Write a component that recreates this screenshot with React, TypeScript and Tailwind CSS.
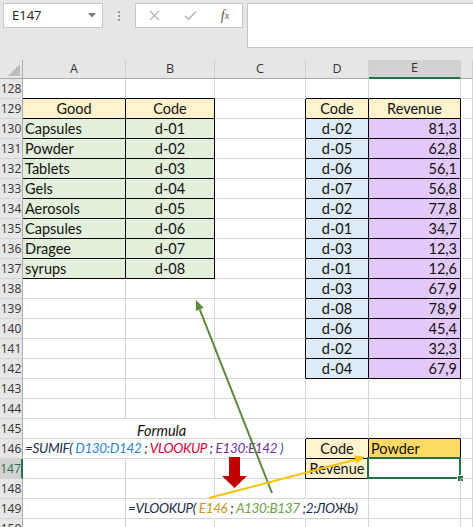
import React from 'react'

type Align = 'l' | 'c' | 'r'

interface CellData {
  text?: React.ReactNode
  bg?: string
  align?: Align
  italic?: boolean
  spill?: boolean
}

const ROWS = Array.from({ length: 23 }, (_, i) => 128 + i)
const COLS = ['A', 'B', 'C', 'D', 'E', 'F']

const goods = ['Capsules', 'Powder', 'Tablets', 'Gels', 'Aerosols', 'Capsules', 'Dragee', 'syrups']
const codesD = ['d-02', 'd-05', 'd-06', 'd-07', 'd-02', 'd-01', 'd-03', 'd-01', 'd-03', 'd-08', 'd-06', 'd-02', 'd-04']
const revenue = ['81,3', '62,8', '56,1', '56,8', '77,8', '34,7', '12,3', '12,6', '67,9', '78,9', '45,4', '32,3', '67,9']

const cn = (...parts: (string | false | undefined)[]) => parts.filter(Boolean).join(' ')

// which cells sit inside a bordered table
const inTable = (r: number, c: number) =>
  ((c === 0 || c === 1) && r >= 129 && r <= 137) ||
  ((c === 3 || c === 4) && r >= 129 && r <= 142) ||
  ((c === 3 || c === 4) && r >= 146 && r <= 147)

// right borders hidden where text spills over / merged cells
const hiddenRight = (r: number, c: number) =>
  ((r === 145 || r === 146) && (c === 0 || c === 1)) || (r === 149 && (c === 1 || c === 2))

const sumifFormula = (
  <>
    <span className="text-[#1c2a4a]">=SUMIF( </span>
    <span className="text-[#1f86d6]">D130:D142</span>
    <span className="text-[#1c2a4a]"> ; </span>
    <span className="text-[#d8003a]">VLOOKUP</span>
    <span className="text-[#1c2a4a]"> ; </span>
    <span className="text-[#7030a0]">E130:E142</span>
    <span className="text-[#1f4fb0]"> )</span>
  </>
)

const vlookupFormula = (
  <>
    <span className="text-[#1c2a4a]">=VLOOKUP( </span>
    <span className="text-[#c8961a]">E146</span>
    <span className="text-[#1c2a4a]"> ; </span>
    <span className="text-[#6aa047]">A130:B137</span>
    <span className="text-[#1c2a4a]"> ;2;ЛОЖЬ)</span>
  </>
)

function getCell(r: number, c: number): CellData {
  if (r === 129) {
    if (c === 0) return { text: 'Good', bg: 'bg-[#fff2cc]', align: 'c' }
    if (c === 1 || c === 3) return { text: 'Code', bg: 'bg-[#fff2cc]', align: 'c' }
    if (c === 4) return { text: 'Revenue', bg: 'bg-[#fff2cc]', align: 'c' }
  }
  if (r >= 130 && r <= 137) {
    if (c === 0) return { text: goods[r - 130], bg: 'bg-[#e2efda]', align: 'l' }
    if (c === 1) return { text: `d-0${r - 129}`, bg: 'bg-[#e2efda]', align: 'c' }
  }
  if (r >= 130 && r <= 142) {
    if (c === 3) return { text: codesD[r - 130], bg: 'bg-[#ddebf7]', align: 'c' }
    if (c === 4) return { text: revenue[r - 130], bg: 'bg-[#e3c9f9]', align: 'r' }
  }
  if (r === 145 && c === 0) return { text: 'Formula', italic: true, spill: true }
  if (r === 146) {
    if (c === 0) return { text: sumifFormula, italic: true, spill: true, align: 'l' }
    if (c === 3) return { text: 'Code', bg: 'bg-[#fff2cc]', align: 'c' }
    if (c === 4) return { text: 'Powder', bg: 'bg-[#ffd966]', align: 'l' }
  }
  if (r === 147 && c === 3) return { text: 'Revenue', bg: 'bg-[#fff2cc]', align: 'c' }
  if (r === 149 && c === 1) return { text: vlookupFormula, italic: true, spill: true, align: 'l' }
  return {}
}

const SheetCell: React.FC<{ r: number; c: number }> = ({ r, c }) => {
  const cell = getCell(r, c)
  const rightBlack = inTable(r, c) || inTable(r, c + 1)
  const bottomBlack = inTable(r, c) || inTable(r + 1, c)
  const selected = r === 147 && c === 4
  const formula = (r === 146 && c === 0) || (r === 149 && c === 1)

  return (
    <div
      className={cn(
        'relative flex h-[20px] items-center border-r border-b whitespace-nowrap',
        rightBlack ? 'border-r-black' : hiddenRight(r, c) ? 'border-r-transparent' : 'border-r-[#d4d4d4]',
        bottomBlack ? 'border-b-black' : 'border-b-[#d4d4d4]',
        cell.bg,
        cell.align === 'c' && 'justify-center',
        cell.align === 'r' && 'justify-end pr-[3px]',
        cell.align === 'l' && 'pl-[2px]',
        cell.italic && 'italic',
        cell.spill && 'z-10 overflow-visible'
      )}
    >
      {r === 145 && c === 0 ? (
        <span className="absolute left-[114px] top-[1px]">Formula</span>
      ) : (
        cell.text && (
          <span className={cn(cell.spill && 'relative', formula && 'text-[13.5px] tracking-[-0.35px]')}>
            {cell.text}
          </span>
        )
      )}
      {selected && (
        <>
          <div className="absolute -left-[2px] -top-[2px] -right-[1px] -bottom-[1px] border-2 border-[#217346]" />
          <div className="absolute -right-[4px] -bottom-[4px] h-[7px] w-[7px] border border-white bg-[#217346]" />
        </>
      )}
    </div>
  )
}

const FormulaBar: React.FC = () => (
  <div className="flex h-[60px] items-start bg-[#e6e6e6] pt-[3px] font-['Open_Sans',sans-serif]">
    {/* Name box */}
    <div className="ml-[3px] flex h-[25px] w-[100px] items-center justify-between border border-[#c6c6c6] bg-white pl-[8px] pr-[6px]">
      <span className="text-[13px] text-[#222]">E147</span>
      <svg width="8" height="5" viewBox="0 0 8 5">
        <path d="M0 0 L8 0 L4 4.5 Z" fill="#7a7a7a" />
      </svg>
    </div>
    {/* grip dots */}
    <div className="flex h-[25px] w-[32px] flex-col items-center justify-center gap-[2px]">
      <div className="h-[2px] w-[2px] bg-[#9a9a9a]" />
      <div className="h-[2px] w-[2px] bg-[#9a9a9a]" />
      <div className="h-[2px] w-[2px] bg-[#9a9a9a]" />
    </div>
    {/* cancel / enter / fx */}
    <div className="flex h-[25px] w-[108px] items-center border border-[#c6c6c6] bg-white">
      <div className="flex w-[36px] justify-center">
        <svg width="11" height="11" viewBox="0 0 11 11">
          <path d="M1 1 L10 10 M10 1 L1 10" stroke="#b4b4b4" strokeWidth="1.3" />
        </svg>
      </div>
      <div className="flex w-[36px] justify-center">
        <svg width="13" height="11" viewBox="0 0 13 11">
          <path d="M1 6 L4.5 9.5 L12 1.5" stroke="#b4b4b4" strokeWidth="1.5" fill="none" />
        </svg>
      </div>
      <div className="flex w-[34px] justify-center font-['Liberation_Serif',serif] text-[14px] text-[#555] italic">
        f<span className="mt-[3px] text-[10px]">x</span>
      </div>
    </div>
    {/* formula input */}
    <div className="ml-[4px] h-[45px] flex-1 border border-r-0 border-[#c6c6c6] bg-white" />
  </div>
)

const Arrows: React.FC = () => (
  <svg className="pointer-events-none absolute inset-0 z-20" width="473" height="527" viewBox="0 0 473 527">
    {/* green arrow */}
    <line x1="272" y1="493" x2="199.7" y2="309.3" stroke="#5a8a3a" strokeWidth="2" />
    <polygon points="196,300 203.6,307.8 195.8,310.9" fill="#5a8a3a" />
    {/* yellow arrow */}
    <line x1="209" y1="498" x2="356" y2="459.5" stroke="#ffc000" strokeWidth="2" />
    <polygon points="365,457 356.4,463.6 354.3,455.4" fill="#ffc000" />
    {/* red down arrow */}
    <rect x="229" y="457" width="11" height="19" fill="#c00000" />
    <polygon points="222,476 247,476 234.5,488" fill="#c00000" />
  </svg>
)

export default function App() {
  return (
    <div className="relative h-[527px] w-[473px] overflow-hidden bg-white">
      <FormulaBar />
      <div className="grid grid-cols-[23px_103px_89px_91px_63px_92px_1fr]">
        {/* column headers */}
        <div className="relative h-[19px] border-r border-b border-[#ababab] bg-[#e6e6e6]">
          <svg className="absolute right-[2px] bottom-[2px]" width="12" height="12" viewBox="0 0 12 12">
            <polygon points="12,0 12,12 0,12" fill="#bdbdbd" />
          </svg>
        </div>
        {COLS.map((col, i) => (
          <div
            key={col}
            className={cn(
              "flex h-[19px] items-center justify-center border-r border-r-[#d0d0d0] font-['Open_Sans',sans-serif] text-[12.5px] text-[#333]",
              i === 4 ? 'border-b-2 border-b-[#217346] bg-[#d2d2d2]' : 'border-b border-b-[#ababab] bg-[#e6e6e6]'
            )}
          >
            {i < 5 ? col : null}
          </div>
        ))}

        {ROWS.map((r) => (
          <React.Fragment key={r}>
            <div
              className={cn(
                "flex h-[20px] items-center justify-center border-b border-b-[#d4d4d4] font-['Open_Sans',sans-serif] text-[12px]",
                r === 147
                  ? 'border-r-2 border-r-[#217346] bg-[#d2d2d2] text-[#217346]'
                  : 'border-r border-r-[#ababab] bg-[#e6e6e6] text-[#333]'
              )}
            >
              {r}
            </div>
            {COLS.map((_, c) => (
              <div key={c} className="font-['Lato',sans-serif] text-[14.5px] text-[#111]">
                <SheetCell r={r} c={c} />
              </div>
            ))}
          </React.Fragment>
        ))}
      </div>
      <Arrows />
    </div>
  )
}
